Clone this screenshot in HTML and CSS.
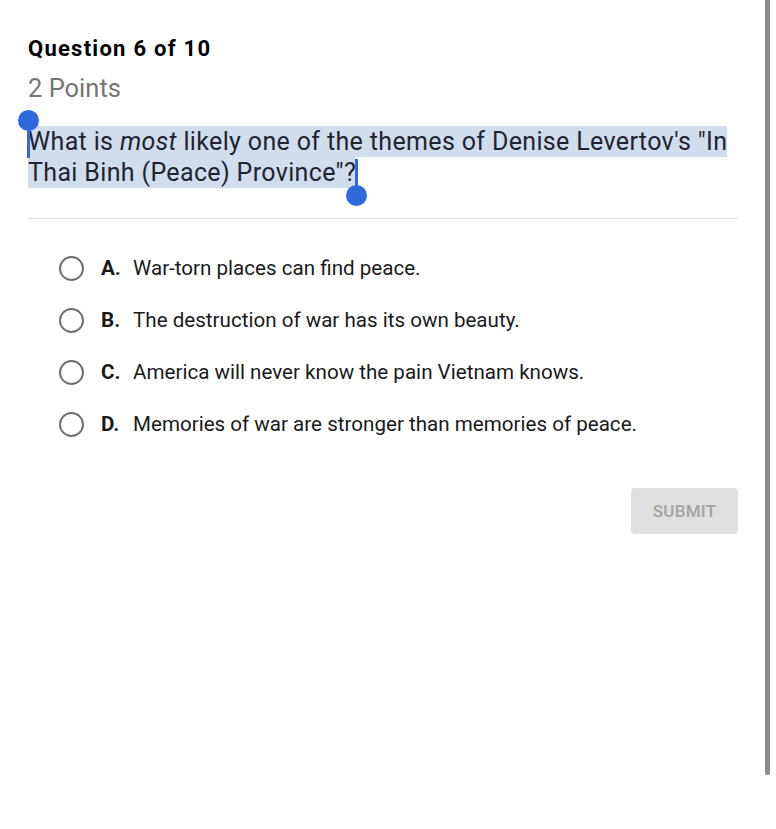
FILE: index.html
```html
<!DOCTYPE html>
<html>
<head>
<meta charset="utf-8">
<link rel="stylesheet" href="styles.css">
</head>
<body>
<div class="page">
  <main class="quiz">
    <h1 class="title">Question 6 of 10</h1>
    <div class="points">2 Points</div>
    <p class="question"><span class="caret caret-start"></span><span class="sel">What is <em>most</em> likely one of the themes of Denise Levertov's "In Thai Binh (Peace) Province"?</span><span class="caret caret-end"></span></p>
    <hr class="divider">
    <ul class="options">
      <li class="option"><span class="radio"></span><span class="letter">A.</span><span class="text">War-torn places can find peace.</span></li>
      <li class="option"><span class="radio"></span><span class="letter">B.</span><span class="text">The destruction of war has its own beauty.</span></li>
      <li class="option"><span class="radio"></span><span class="letter">C.</span><span class="text">America will never know the pain Vietnam knows.</span></li>
      <li class="option"><span class="radio"></span><span class="letter">D.</span><span class="text">Memories of war are stronger than memories of peace.</span></li>
    </ul>
    <div class="actions">
      <button class="submit">SUBMIT</button>
    </div>
  </main>
  <div class="scrollbar"></div>
</div>
</body>
</html>
```
FILE: styles.css
```css
html, body {
  margin: 0;
  padding: 0;
  background: #ffffff;
}
body {
  font-family: Roboto, "Liberation Sans", sans-serif;
  color: #212121;
  width: 776px;
  height: 829px;
  overflow: hidden;
}
.page {
  display: flex;
  height: 829px;
}
.quiz {
  width: 710px;
  padding: 36px 0 0 28px;
}
.title {
  margin: 0;
  font-size: 22px;
  font-weight: 700;
  line-height: 26px;
  color: #000;
  letter-spacing: 1.25px;
}
.points {
  margin-top: 11px;
  font-size: 25.5px;
  line-height: 30px;
  color: #757575;
}
.question {
  margin: 23px 0 0 0;
  font-size: 25px;
  letter-spacing: 0.35px;
  line-height: 31px;
  color: #1f2430;
}
.sel {
  background: #d2ddec;
  padding: 1px 0;
}
.question em {
  font-style: italic;
}
.caret {
  position: relative;
  display: inline;
}
.caret::before {
  content: "";
  position: absolute;
  left: -1px;
  top: 1px;
  width: 3px;
  height: 30px;
  background: #3069dc;
}
.caret::after {
  content: "";
  position: absolute;
  width: 21px;
  height: 21px;
  border-radius: 50%;
  background: #3069dc;
  left: -10px;
}
.caret-start::after {
  top: -17px;
}
.caret-end::after {
  top: 27px;
}
.divider {
  margin: 30px 0 0 0;
  border: 0;
  border-top: 1px solid #e3e3e3;
  height: 0;
}
.options {
  list-style: none;
  margin: 37px 0 0 0;
  padding: 0 0 0 31px;
  display: flex;
  flex-direction: column;
  gap: 28px;
}
.option {
  display: flex;
  align-items: center;
  height: 24px;
  font-size: 20.6px;
  color: #1a1a1a;
}
.radio {
  width: 21px;
  height: 21px;
  border: 2px solid #707070;
  border-radius: 50%;
  flex: none;
}
.letter {
  font-weight: 700;
  margin-left: 17px;
  width: 32px;
}
.actions {
  display: flex;
  justify-content: flex-end;
  margin-top: 52px;
}
.submit {
  width: 107px;
  height: 46px;
  border: 0;
  border-radius: 4px;
  background: #e0e0e0;
  color: #a3a3a3;
  font-family: Roboto, "Liberation Sans", sans-serif;
  font-size: 17px;
  font-weight: 500;
  letter-spacing: 0.3px;
}
.scrollbar {
  margin-left: 27px;
  width: 5px;
  height: 775px;
  background: #8c8c8c;
  border-radius: 0 0 2px 2px;
}
```
